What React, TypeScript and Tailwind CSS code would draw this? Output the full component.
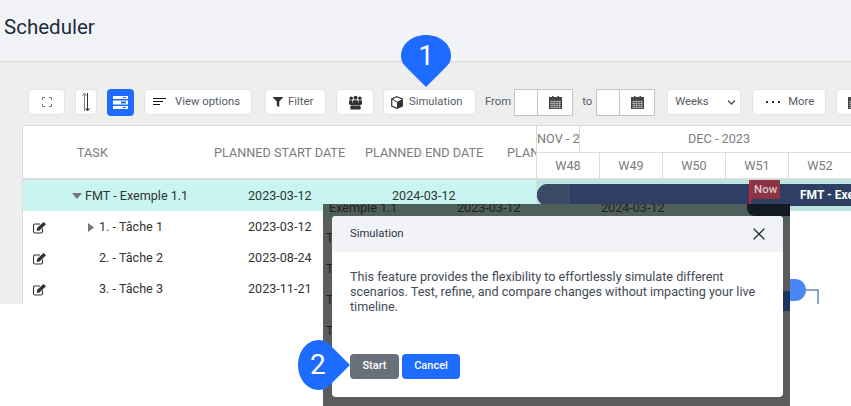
import { FaFilter, FaChevronDown } from "react-icons/fa";
import { X } from "lucide-react";

const btn =
  "flex items-center h-[26px] bg-white rounded border border-[#e4e4e4] text-[11.3px] text-[#555b66] shrink-0";

function CalendarIcon() {
  return (
    <svg width="13" height="13" viewBox="0 0 13 13" className="text-[#444]">
      <rect x="0" y="1" width="13" height="12" fill="currentColor" />
      <rect x="3" y="0" width="1.5" height="2" fill="currentColor" />
      <rect x="8.5" y="0" width="1.5" height="2" fill="currentColor" />
      <path d="M1 5.5h11M1 7.5h11M1 9.5h11M1 11.5h11M3 4.5v8M5.5 4.5v8M8 4.5v8M10.5 4.5v8" stroke="#bbb" strokeWidth="0.7" />
    </svg>
  );
}

function EditIcon() {
  return (
    <svg width="13" height="12" viewBox="0 0 13 12" className="ml-[10px] shrink-0">
      <path d="M9.5 6.5v3a1.5 1.5 0 0 1-1.5 1.5H2A1.5 1.5 0 0 1 .5 9.5v-6A1.5 1.5 0 0 1 2 2h5" fill="none" stroke="#333" strokeWidth="1.1" />
      <path d="M4 6l6.5-6L13 2.2 6.5 8.5 3.8 9z" fill="#333" />
    </svg>
  );
}

function DateInput() {
  return (
    <div className="flex h-[27px] w-[59px] bg-white border border-[#c4c4c4] shrink-0">
      <div className="w-[23px] border-r border-[#c4c4c4]" />
      <div className="flex-1 flex items-center justify-center">
        <CalendarIcon />
      </div>
    </div>
  );
}

const rows = [
  { name: "1. - Tâche 1", start: "2023-03-12", arrow: true },
  { name: "2. - Tâche 2", start: "2023-08-24", arrow: false },
  { name: "3. - Tâche 3", start: "2023-11-21", arrow: false },
];

const weeks = ["W48", "W49", "W50", "W51", "W52"];

export default function App() {
  return (
    <div className="relative w-[851px] h-[406px] overflow-hidden bg-white font-['Roboto',sans-serif]">
      <div className="h-[304px] bg-[#eeeeee] overflow-hidden">
        <div className="h-[62px] bg-[#f2f3f7] border-b border-[#dcdcdc] pl-1 pt-[15px]">
          <h1 className="text-[20.5px] leading-[25px] text-[#1f2a3c]">Scheduler</h1>
        </div>

        {/* toolbar */}
        <div className="flex items-center h-[63px] pl-[28px] pt-[17px]">
          <div className={`${btn} justify-center w-[37px]`}>
            <svg width="10" height="10" viewBox="0 0 10 10" fill="none" stroke="#777" strokeWidth="1">
              <path d="M.5 3V.5H3M7 .5h2.5V3M9.5 7v2.5H7M3 9.5H.5V7" />
            </svg>
          </div>
          <div className={`${btn} justify-center w-[22px] ml-[10px]`}>
            <svg width="8" height="20" viewBox="0 0 8 20" fill="none" strokeWidth="1">
              <path d="M2.5 19V2M.5 4l2-3 2 3" stroke="#6a8aa0" />
              <path d="M5.5 1v17M3.5 16l2 3 2-3" stroke="#333" />
            </svg>
          </div>
          <div className="flex items-center justify-center w-[27px] h-[27px] bg-[#1e6cff] rounded-sm ml-[10px] shrink-0">
            <svg width="15" height="13" viewBox="0 0 15 13" fill="white">
              <rect x="0" y="0" width="15" height="3" />
              <rect x="0" y="4.5" width="15" height="4" />
              <rect x="0" y="10" width="15" height="3" />
              <rect x="10" y="1" width="3" height="1" fill="#1e6cff" />
              <rect x="8" y="5.5" width="5" height="2" fill="#1e6cff" />
              <rect x="10" y="11" width="3" height="1" fill="#1e6cff" />
            </svg>
          </div>
          <div className={`${btn} w-[108px] ml-[10px] pl-[8px] gap-[9px]`}>
            <svg width="13" height="8" viewBox="0 0 13 8" stroke="#111" strokeWidth="1">
              <path d="M0 .5h13M0 3.5h10M0 6.5h7" />
            </svg>
            <span>View options</span>
          </div>
          <div className={`${btn} w-[61px] ml-[13px] pl-[7px] gap-[5px]`}>
            <FaFilter className="text-[10px] text-[#333]" />
            <span>Filter</span>
          </div>
          <div className={`${btn} justify-center w-[38px] ml-[10px]`}>
            <svg width="13" height="15" viewBox="0 0 15 16" fill="#333">
              <circle cx="2.5" cy="3" r="2" />
              <circle cx="7.5" cy="2.5" r="2.3" />
              <circle cx="12.5" cy="3" r="2" />
              <rect x="0" y="5.5" width="4" height="5" rx="1" />
              <rect x="11" y="5.5" width="4" height="5" rx="1" />
              <circle cx="3.5" cy="10" r="1.8" />
              <circle cx="11.5" cy="10" r="1.8" />
              <rect x="4.5" y="5.5" width="6" height="6" rx="1" />
              <rect x="1.5" y="12" width="12" height="4" rx="1" />
            </svg>
          </div>
          <div className={`${btn} w-[93px] ml-[9px] pl-[7px] gap-[6px]`}>
            <svg width="12" height="13" viewBox="0 0 12 13">
              <path d="M6 .7l5.3 2.3v7L6 12.3.7 10V3z" fill="none" stroke="#333" strokeWidth="1.2" />
              <path d="M6 6l5.3-3v7L6 12.3z" fill="#333" />
              <path d="M.7 3L6 6" stroke="#333" strokeWidth="1" />
            </svg>
            <span>Simulation</span>
          </div>
          <span className="ml-[9px] mr-[3px] text-[11.3px] text-[#555b66]">From</span>
          <DateInput />
          <span className="ml-[9px] mr-[4px] text-[11.3px] text-[#555b66]">to</span>
          <DateInput />
          <div className={`${btn} justify-between w-[74px] ml-[12px] pl-[7px] pr-[4px]`}>
            <span>Weeks</span>
            <FaChevronDown className="text-[9px] text-[#555]" />
          </div>
          <div className={`${btn} w-[74px] ml-[11px] pl-[13px] gap-[8px]`}>
            <span className="flex gap-[4px]">
              <i className="w-[2px] h-[2px] bg-[#333]" />
              <i className="w-[2px] h-[2px] bg-[#333]" />
              <i className="w-[2px] h-[2px] bg-[#333]" />
            </span>
            <span>More</span>
          </div>
          <div className={`${btn} w-[40px] ml-[10px] pl-[11px]`}>
            <CalendarIcon />
          </div>
        </div>

        {/* table + gantt */}
        <div className="flex ml-[22px] h-[179px] bg-white border-t border-l border-[#dcdcdc]">
          <div className="w-[513px] shrink-0 overflow-hidden">
            <div className="h-[54px] pt-[2px] grid grid-cols-[54px_137px_151px_142px_100px] items-center border-b-2 border-[#dcdcdc] text-[12.7px] text-[#7c7c7c] whitespace-nowrap">
              <span className="col-start-2">TASK</span>
              <span>PLANNED START DATE</span>
              <span>PLANNED END DATE</span>
              <span>PLANNED</span>
            </div>
            <div className="h-[31px] pt-[1px] bg-[#c8f5f0] flex items-center text-[12.6px] text-[#333]">
              <svg width="10" height="6" viewBox="0 0 10 6" className="ml-[49px] mr-[3px]">
                <path d="M0 0h10L5 6z" fill="#777" />
              </svg>
              <span className="w-[163px]">FMT - Exemple 1.1</span>
              <span className="w-[144px]">2023-03-12</span>
              <span>2024-03-12</span>
            </div>
            {rows.map((r) => (
              <div key={r.name} className="h-[31px] pt-[2px] flex items-center text-[12.6px] text-[#333]">
                <EditIcon />
                <span className="w-[53px] flex justify-end pr-[5px]">
                  {r.arrow && (
                    <svg width="6" height="9" viewBox="0 0 6 9">
                      <path d="M0 0l6 4.5L0 9z" fill="#777" />
                    </svg>
                  )}
                </span>
                <span className="w-[149px]">{r.name}</span>
                <span>{r.start}</span>
              </div>
            ))}
          </div>

          <div className="flex-1 min-w-0 border-l border-[#dcdcdc] overflow-hidden">
            <div className="flex h-[27px] border-b border-[#dcdcdc] text-[12.7px] text-[#7c7c7c] items-center">
              <div className="w-[43px] h-full flex items-center border-r border-[#dcdcdc] overflow-hidden whitespace-nowrap">NOV - 2023</div>
              <div className="flex-1 text-center pl-[7px]">DEC - 2023</div>
            </div>
            <div className="flex h-[27px] pt-[1px] border-b-2 border-[#dcdcdc] text-[12.7px] text-[#7c7c7c]">
              {weeks.map((w) => (
                <div key={w} className="w-[63px] -mt-[1px] pt-[1px] flex items-center justify-center border-r border-[#dcdcdc] shrink-0">
                  {w}
                </div>
              ))}
            </div>
            <div className="relative h-[125px]">
              <div className="flex h-full absolute inset-0">
                {weeks.map((w) => (
                  <div key={w} className="w-[63px] shrink-0 border-r border-[#e8e8e8]" />
                ))}
              </div>
              <div className="absolute inset-x-0 top-0 h-[31px] bg-[#bce5e1]" />
              <div className="absolute left-0 top-[4px] w-[340px] h-[22px] rounded-l-[11px] bg-[#2f3f63] flex items-center overflow-hidden">
                <div className="w-[33px] h-full bg-[#3b4a66] shrink-0" />
                <span className="ml-[230px] text-[12px] font-bold text-white whitespace-nowrap">FMT - Exemple</span>
              </div>
              <div className="absolute left-[212px] top-0 w-[31px] h-[19px] bg-[#8c3346] border-l-2 border-[#b8283a] text-[11.5px] font-medium text-[#ddc9cc] pl-[3px] leading-[18px]">
                Now
              </div>
              <div className="absolute left-[212px] top-[19px] h-[6px] w-[2px] bg-[#b8283a]" />
              <div className="absolute left-[253px] top-[99px] w-[16px] h-[22px] rounded-r-full bg-[#4a86f7]" />
              <div className="absolute left-[269px] top-[109px] w-[13px] h-[16px] border-t-2 border-r-2 border-[#8aa6c4]" />
            </div>
          </div>
        </div>
      </div>

      {/* modal overlay */}
      <div className="absolute left-[323px] top-[204px] w-[467px] h-[202px] bg-[#5c5c5c] overflow-hidden text-[12.6px] text-[#1f1f1f]">
        <div className="absolute inset-x-0 top-0 h-[18px] bg-[#4f5f5b]" />
        <div className="absolute right-0 top-0 w-[43px] h-[12px] rounded-bl-[8px] bg-[#131a24]" />
        <span className="absolute left-[6px] -top-[5px]">Exemple 1.1</span>
        <span className="absolute left-[134px] -top-[5px]">2023-03-12</span>
        <span className="absolute left-[278px] -top-[5px]">2024-03-12</span>
        <span className="absolute left-[3px] top-[25px]">T</span>
        <span className="absolute left-[3px] top-[56px]">T</span>
        <span className="absolute left-[3px] top-[87px]">T</span>
        <span className="absolute left-[3px] top-[118px]">T</span>
        <div className="absolute right-0 top-[87px] w-[7px] h-[20px] bg-[#1e3260]" />

        <div className="absolute left-[9px] top-[12px] w-[451px] h-[181px] bg-white rounded-sm flex flex-col">
          <div className="h-[36px] bg-[#f2f3f7] flex items-center justify-between pl-[18px] pr-[14px] rounded-t-sm">
            <span className="text-[11.3px] text-[#2c3444]">Simulation</span>
            <X className="w-[20px] h-[20px] text-[#1f2a3c]" strokeWidth={1.5} />
          </div>
          <p className="mt-[17px] px-[18px] text-[12.6px] leading-[15px] text-[#444a55]">
            This feature provides the flexibility to effortlessly simulate different scenarios. Test, refine, and compare changes without impacting your live timeline.
          </p>
          <div className="mt-auto mb-[18px] ml-[18px] flex gap-[3px]">
            <button className="w-[49px] h-[25px] bg-[#68717a] rounded-sm text-white text-[11px] font-medium">Start</button>
            <button className="w-[58px] h-[25px] bg-[#1e6cff] rounded-sm text-white text-[11px] font-medium">Cancel</button>
          </div>
        </div>
      </div>

      {/* callouts */}
      <div className="absolute left-[401px] top-[35px] w-[50px] h-[50px]">
        <svg width="50" height="52" viewBox="0 0 50 52" className="absolute inset-0">
          <path d="M25 0C39 0 50 9 50 21c0 6-3 9-6 12L25 52 6 33C3 30 0 27 0 21 0 9 11 0 25 0z" fill="#1e6cff" />
        </svg>
        <span className="absolute inset-x-0 top-[4px] text-center text-[28px] leading-[34px] text-white">1</span>
      </div>
      <div className="absolute left-[298px] top-[339px] w-[52px] h-[52px]">
        <svg width="52" height="52" viewBox="0 0 52 52" className="absolute inset-0">
          <path d="M0 26C0 12 9 1 21 1c6 0 9 3 12 6l19 19-19 19c-3 3-6 6-12 6C9 51 0 40 0 26z" fill="#1e6cff" />
        </svg>
        <span className="absolute left-[12px] top-[9px] text-[28px] leading-[34px] text-white">2</span>
      </div>
    </div>
  );
}
